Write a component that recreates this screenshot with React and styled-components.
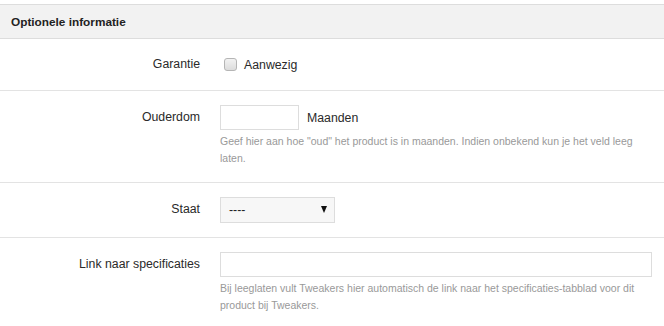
import React from "react";
import styled, { createGlobalStyle } from "styled-components";

const GlobalStyle = createGlobalStyle`
  body {
    margin: 0;
    background: #ffffff;
    font-family: "Liberation Sans", Arial, sans-serif;
    color: #333333;
  }
`;

const Panel = styled.section`
  margin-top: 4px;
  border-top: 1px solid #dddddd;
`;

const PanelHead = styled.h3`
  margin: 0;
  height: 33px;
  display: flex;
  align-items: center;
  padding: 0 11px;
  background: #f2f2f2;
  border-bottom: 1px solid #dddddd;
  font-size: 11.8px;
  font-weight: bold;
  color: #222222;
`;

const Row = styled.div`
  display: grid;
  grid-template-columns: 200px 1fr;
  column-gap: 20px;
  padding: ${(p) => p.$pad || "14px"} 12px ${(p) => p.$pad || "15px"} 0;
  border-bottom: 1px solid #e3e3e3;
  &:last-child {
    border-bottom: none;
  }
`;

const Label = styled.label`
  text-align: right;
  font-size: 12.3px;
  line-height: 25px;
  color: #2a2a2a;
`;

const Field = styled.div`
  display: flex;
  flex-direction: column;
`;

const Line = styled.div`
  display: flex;
  align-items: center;
  height: 25px;
  gap: 8px;
  font-size: 12.3px;
  color: #2a2a2a;
`;

const Check = styled.span`
  width: 11px;
  height: 11px;
  margin-left: 4px;
  margin-right: -1px;
  border: 1px solid #b5b5b5;
  border-radius: 3px;
  background: linear-gradient(#f2f2f2, #dcdcdc);
`;

const TextInput = styled.input`
  box-sizing: border-box;
  width: ${(p) => p.$width || "100%"};
  height: 25px;
  border: 1px solid #dddddd;
  padding: 0 6px;
  font: 13px "Liberation Sans", Arial, sans-serif;
  outline: none;
`;

const Select = styled.div`
  box-sizing: border-box;
  width: 115px;
  height: 26px;
  display: flex;
  align-items: center;
  justify-content: space-between;
  padding: 0 7px 0 8px;
  border: 1px solid #dddddd;
  background: #f7f7f7;
  font-size: 12.3px;
  color: #222222;
`;

const Caret = styled.span`
  width: 0;
  height: 0;
  border-left: 3.5px solid transparent;
  border-right: 3.5px solid transparent;
  border-top: 7px solid #111111;
`;

const Help = styled.p`
  margin: 3px 0 0;
  font-size: 10.5px;
  line-height: 17px;
  color: #999999;
`;

export default function App() {
  return (
    <>
      <GlobalStyle />
      <Panel>
        <PanelHead>Optionele informatie</PanelHead>
        <Row $pad="13px">
          <Label>Garantie</Label>
          <Line>
            <Check />
            Aanwezig
          </Line>
        </Row>
        <Row>
          <Label>Ouderdom</Label>
          <Field>
            <Line>
              <TextInput $width="79px" />
              Maanden
            </Line>
            <Help>
              Geef hier aan hoe "oud" het product is in maanden. Indien onbekend kun je het veld leeg laten.
            </Help>
          </Field>
        </Row>
        <Row>
          <Label>Staat</Label>
          <Line>
            <Select>
              ----
              <Caret />
            </Select>
          </Line>
        </Row>
        <Row>
          <Label>Link naar specificaties</Label>
          <Field>
            <Line>
              <TextInput />
            </Line>
            <Help>
              Bij leeglaten vult Tweakers hier automatisch de link naar het specificaties-tabblad voor dit product bij Tweakers.
            </Help>
          </Field>
        </Row>
      </Panel>
    </>
  );
}
